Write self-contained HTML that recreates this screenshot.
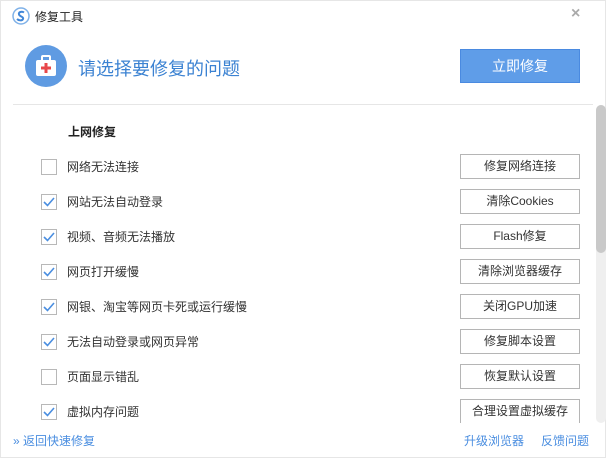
<!DOCTYPE html>
<html><head><meta charset="utf-8"><style>
*{margin:0;padding:0;box-sizing:border-box}
body{width:606px;height:458px;background:#fff;font-family:"Liberation Sans","Noto Sans CJK SC",sans-serif;position:relative;overflow:hidden;border:1px solid #e6e6e6}
.a{position:absolute}
.row{position:absolute;left:0;width:590px;height:35px}
.cb{position:absolute;left:40px;top:10px;width:16px;height:16px;border:1px solid #b8b8b8;background:#fff}
.cb svg{position:absolute;left:1px;top:2px}
.lbl{position:absolute;left:66px;top:9px;font-size:12px;color:#333;line-height:18px}
.btn{position:absolute;left:459px;top:5px;width:120px;height:25px;border:1px solid #b5b5b5;font-size:12px;color:#333;text-align:center;line-height:23px;background:#fff}
</style></head><body>
<svg class="a" style="left:11px;top:6px" width="18" height="18" viewBox="0 0 18 18"><circle cx="9" cy="9" r="8" fill="none" stroke="#7fb1e8" stroke-width="1.5"/><path d="M12 5.5C10 4 6 5 7 7.5S12 9.5 11 12 6 13 5 12" fill="none" stroke="#3f86d8" stroke-width="2"/></svg>
<div class="a" style="left:34px;top:7px;font-size:12px;color:#222">修复工具</div>
<div class="a" style="left:570px;top:4px;font-size:16px;color:#aaa;font-weight:bold">×</div>
<svg class="a" style="left:24px;top:44px" width="42" height="42" viewBox="0 0 42 42"><circle cx="21" cy="21" r="21" fill="#5f9be2"/><rect x="11" y="15" width="20" height="16" rx="2" fill="#fff"/><rect x="17" y="11" width="8" height="5" rx="1" fill="none" stroke="#fff" stroke-width="2"/><rect x="19.5" y="18" width="3" height="10" fill="#e8474a"/><rect x="16" y="21.5" width="10" height="3" fill="#e8474a"/></svg>
<div class="a" style="left:77px;top:54px;font-size:18px;color:#3b82d2">请选择要修复的问题</div>
<div class="a" style="left:459px;top:48px;width:120px;height:34px;background:#5f9de8;border:1px solid #4a8ae0;color:#fff;font-size:14px;text-align:center;line-height:32px">立即修复</div>
<div class="a" style="left:12px;top:103px;width:580px;height:1px;background:#e6e6e6"></div>
<div class="a" style="left:595px;top:104px;width:10px;height:318px;background:#efefef;border-radius:5px"></div>
<div class="a" style="left:595px;top:104px;width:10px;height:148px;background:#c9c9c9;border-radius:5px"></div>
<div class="a" style="left:67px;top:122px;font-size:12px;font-weight:bold;color:#222">上网修复</div>
<div class="a" style="left:0;top:0;width:590px;height:422px;overflow:hidden">
<div class="row" style="top:148px"><div class="cb"></div><div class="lbl">网络无法连接</div><div class="btn">修复网络连接</div></div>
<div class="row" style="top:183px"><div class="cb"><svg width="12" height="10"><path d="M1 5l3.5 3.5L11 1" fill="none" stroke="#4a8ee0" stroke-width="1.6"/></svg></div><div class="lbl">网站无法自动登录</div><div class="btn">清除Cookies</div></div>
<div class="row" style="top:218px"><div class="cb"><svg width="12" height="10"><path d="M1 5l3.5 3.5L11 1" fill="none" stroke="#4a8ee0" stroke-width="1.6"/></svg></div><div class="lbl">视频、音频无法播放</div><div class="btn">Flash修复</div></div>
<div class="row" style="top:253px"><div class="cb"><svg width="12" height="10"><path d="M1 5l3.5 3.5L11 1" fill="none" stroke="#4a8ee0" stroke-width="1.6"/></svg></div><div class="lbl">网页打开缓慢</div><div class="btn">清除浏览器缓存</div></div>
<div class="row" style="top:288px"><div class="cb"><svg width="12" height="10"><path d="M1 5l3.5 3.5L11 1" fill="none" stroke="#4a8ee0" stroke-width="1.6"/></svg></div><div class="lbl">网银、淘宝等网页卡死或运行缓慢</div><div class="btn">关闭GPU加速</div></div>
<div class="row" style="top:323px"><div class="cb"><svg width="12" height="10"><path d="M1 5l3.5 3.5L11 1" fill="none" stroke="#4a8ee0" stroke-width="1.6"/></svg></div><div class="lbl">无法自动登录或网页异常</div><div class="btn">修复脚本设置</div></div>
<div class="row" style="top:358px"><div class="cb"></div><div class="lbl">页面显示错乱</div><div class="btn">恢复默认设置</div></div>
<div class="row" style="top:393px"><div class="cb"><svg width="12" height="10"><path d="M1 5l3.5 3.5L11 1" fill="none" stroke="#4a8ee0" stroke-width="1.6"/></svg></div><div class="lbl">虚拟内存问题</div><div class="btn">合理设置虚拟缓存</div></div>
</div>
<div class="a" style="left:12px;top:431px;font-size:12px;color:#4a8ee0">» 返回快速修复</div>
<div class="a" style="left:463px;top:431px;font-size:12px;color:#4a8ee0">升级浏览器</div>
<div class="a" style="left:540px;top:431px;font-size:12px;color:#4a8ee0">反馈问题</div>
</body></html>
